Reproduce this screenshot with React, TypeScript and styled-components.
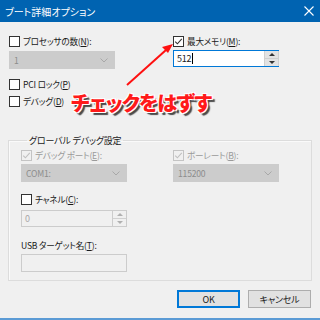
import React from "react";
import styled, { createGlobalStyle } from "styled-components";

const GlobalStyle = createGlobalStyle`
  html, body { margin: 0; padding: 0; background: #f0f0f0; }
  body { font-family: "Noto Sans CJK JP", "Noto Sans", sans-serif; }
`;

const Window = styled.div`
  position: relative;
  width: 320px;
  height: 320px;
  background: #f0f0f0;
  display: flex;
  flex-direction: column;
  overflow: hidden;
  font-size: 8.6px;
  letter-spacing: -0.2px;
  font-feature-settings: "palt";
  color: #1a1a1a;
`;

const TitleBar = styled.div`
  height: 22px;
  flex: none;
  background: #0063b1;
  color: #fff;
  display: flex;
  align-items: center;
  justify-content: space-between;
  padding: 0 6px 0 5px;
  font-size: 10px;
  letter-spacing: 0;
`;

const Body = styled.div`
  flex: 1;
  padding: 14px 9px 0 9px;
  display: flex;
  flex-direction: column;
`;

const TwoCols = styled.div<{ left: number }>`
  display: grid;
  grid-template-columns: ${p => p.left}px 1fr;
`;

const Col = styled.div`
  display: flex;
  flex-direction: column;
`;

const CheckRow = styled.label<{ disabled?: boolean; mt?: number }>`
  display: flex;
  align-items: center;
  gap: 3px;
  height: 11px;
  margin-top: ${p => p.mt ?? 0}px;
  color: ${p => (p.disabled ? "#9a9a9a" : "#1a1a1a")};
  white-space: nowrap;
  line-height: 1;
`;

const Box = styled.span<{ disabled?: boolean }>`
  width: 9px;
  height: 9px;
  flex: none;
  border: 1px solid ${p => (p.disabled ? "#c4c4c4" : "#333")};
  background: ${p => (p.disabled ? "#f0f0f0" : "#fff")};
  display: flex;
  align-items: center;
  justify-content: center;
`;

const Select = styled.div<{ mt?: number }>`
  width: 106px;
  height: 18px;
  box-sizing: border-box;
  margin-top: ${p => p.mt ?? 0}px;
  background: #cccccc;
  border: 1px solid #cccccc;
  color: #8c8c8c;
  display: flex;
  align-items: center;
  justify-content: space-between;
  padding: 0 6px 0 4px;
`;

const Spin = styled.div<{ focused?: boolean; mt?: number }>`
  width: 106px;
  height: 17px;
  box-sizing: border-box;
  margin-top: ${p => p.mt ?? 0}px;
  display: flex;
  border: 1px solid ${p => (p.focused ? "#0078d7" : "#cccccc")};
  border-right: none;
  background: ${p => (p.focused ? "#fff" : "#f0f0f0")};
  color: ${p => (p.focused ? "#1a1a1a" : "#a8a8a8")};
`;

const SpinText = styled.div`
  flex: 1;
  display: flex;
  align-items: center;
  padding-left: 3px;
  font-size: 9px;
`;

const Caret = styled.span`
  display: inline-block;
  width: 1px;
  height: 11px;
  background: #000;
  margin-left: 1px;
`;

const SpinButtons = styled.div<{ focused?: boolean }>`
  width: 13px;
  display: flex;
  flex-direction: column;
  background: ${p => (p.focused ? "#e3e3e3" : "#f0f0f0")};
  border: 1px solid ${p => (p.focused ? "#d0d0d0" : "#cccccc")};
  border-top: none;
  border-bottom: none;
`;

const SpinBtn = styled.div<{ down?: boolean; faded?: boolean }>`
  flex: 1;
  display: flex;
  align-items: center;
  justify-content: center;
  border-top: ${p => (p.down ? "1px solid #d0d0d0" : "none")};
  &::after {
    content: "";
    border-left: 3px solid transparent;
    border-right: 3px solid transparent;
    ${p => (p.down ? "border-top" : "border-bottom")}: 3px solid ${p => (p.faded ? "#b0b0b0" : "#333")};
  }
`;

const Group = styled.fieldset`
  margin: 27px -1px 0 -1px;
  padding: 3px 0 8px 12px;
  border: 1px solid #dcdcdc;
  box-shadow: inset 1px 1px 0 #fafafa;
  min-width: 0;
`;

const Legend = styled.legend`
  margin-left: 6px;
  padding: 0 2px;
  font-size: 9px;
  color: #1a1a1a;
`;

const FieldLabel = styled.div`
  margin-top: 12px;
  height: 12px;
  line-height: 12px;
`;

const TextBox = styled.div`
  width: 106px;
  height: 18px;
  box-sizing: border-box;
  margin-top: 3px;
  border: 1px solid #cccccc;
  background: #f0f0f0;
`;

const ButtonRow = styled.div`
  display: flex;
  justify-content: flex-end;
  gap: 8px;
  margin-top: 9px;
`;

const Button = styled.div<{ primary?: boolean }>`
  width: 63px;
  height: 18px;
  box-sizing: border-box;
  border: 1px solid ${p => (p.primary ? "#0078d7" : "#adadad")};
  box-shadow: ${p => (p.primary ? "inset 0 0 0 1px #0078d7" : "none")};
  background: #e1e1e1;
  display: flex;
  align-items: center;
  justify-content: center;
  font-size: 9px;
  color: #1a1a1a;
`;

const BottomLine = styled.div`
  height: 2px;
  background: #5b9bd5;
  margin-top: auto;
  flex: none;
`;

const Annotation = styled.div`
  position: absolute;
  left: 71px;
  top: 88px;
  font-size: 20px;
  font-weight: 900;
  letter-spacing: -0.8px;
  color: #ff1a1a;
  text-shadow: -1px -1px 0 #fff, 1px -1px 0 #fff, -1px 1px 0 #fff, 1px 1px 0 #fff,
    3px 3px 1px #4a4a4a;
  white-space: nowrap;
`;

const Overlay = styled.svg`
  position: absolute;
  left: 0;
  top: 0;
  pointer-events: none;
`;

const Check = ({ faded }: { faded?: boolean }) => (
  <svg width="9" height="9" viewBox="0 0 9 9">
    <path d="M1.2 4.6 L3.4 6.8 L7.8 1.8" fill="none" stroke={faded ? "#c0c0c0" : "#333"} strokeWidth="1.1" />
  </svg>
);

const Chevron = () => (
  <svg width="8" height="5" viewBox="0 0 8 5">
    <path d="M0.5 0.5 L4 4 L7.5 0.5" fill="none" stroke="#a8a8a8" strokeWidth="1" />
  </svg>
);

const U = styled.u`
  text-underline-offset: 1px;
`;

export default function App() {
  return (
    <>
      <GlobalStyle />
      <Window>
        <TitleBar>
          <span>ブート詳細オプション</span>
          <svg width="10" height="10" viewBox="0 0 10 10">
            <path d="M0.5 0.5 L9.5 9.5 M9.5 0.5 L0.5 9.5" stroke="#fff" strokeWidth="1.1" />
          </svg>
        </TitleBar>
        <Body>
          <TwoCols left={164}>
            <Col>
              <CheckRow>
                <Box />
                <span>プロセッサの数(<U>N</U>):</span>
              </CheckRow>
              <Select mt={4}>
                <span>1</span>
                <Chevron />
              </Select>
              <CheckRow mt={10}>
                <Box />
                <span>PCI ロック(<U>P</U>)</span>
              </CheckRow>
              <CheckRow mt={6}>
                <Box />
                <span>デバッグ(<U>D</U>)</span>
              </CheckRow>
            </Col>
            <Col>
              <CheckRow>
                <Box>
                  <Check />
                </Box>
                <span>最大メモリ(<U>M</U>):</span>
              </CheckRow>
              <Spin focused mt={3}>
                <SpinText>
                  512
                  <Caret />
                </SpinText>
                <SpinButtons focused>
                  <SpinBtn />
                  <SpinBtn down />
                </SpinButtons>
              </Spin>
            </Col>
          </TwoCols>

          <Group>
            <Legend>グローバル デバッグ設定</Legend>
            <TwoCols left={152}>
              <Col>
                <CheckRow disabled>
                  <Box disabled>
                    <Check faded />
                  </Box>
                  <span>デバッグ ポート(<U>E</U>):</span>
                </CheckRow>
                <Select mt={3}>
                  <span>COM1:</span>
                  <Chevron />
                </Select>
                <CheckRow mt={12}>
                  <Box />
                  <span>チャネル(<U>C</U>):</span>
                </CheckRow>
                <Spin mt={5}>
                  <SpinText>0</SpinText>
                  <SpinButtons>
                    <SpinBtn faded />
                    <SpinBtn down faded />
                  </SpinButtons>
                </Spin>
                <FieldLabel>
                  USB ターゲット名(<U>T</U>):
                </FieldLabel>
                <TextBox />
              </Col>
              <Col>
                <CheckRow disabled>
                  <Box disabled>
                    <Check faded />
                  </Box>
                  <span>ボーレート(<U>B</U>):</span>
                </CheckRow>
                <Select mt={3}>
                  <span>115200</span>
                  <Chevron />
                </Select>
              </Col>
            </TwoCols>
          </Group>

          <ButtonRow>
            <Button primary>OK</Button>
            <Button>キャンセル</Button>
          </ButtonRow>
        </Body>
        <BottomLine />

        <Overlay width="320" height="320" viewBox="0 0 320 320">
          <line x1="127" y1="85" x2="166" y2="50" stroke="#ff1010" strokeWidth="2" />
          <path d="M173 44 L162 47 L168 53 Z" fill="#ff1010" />
        </Overlay>
        <Annotation>チェックをはずす</Annotation>
      </Window>
    </>
  );
}
